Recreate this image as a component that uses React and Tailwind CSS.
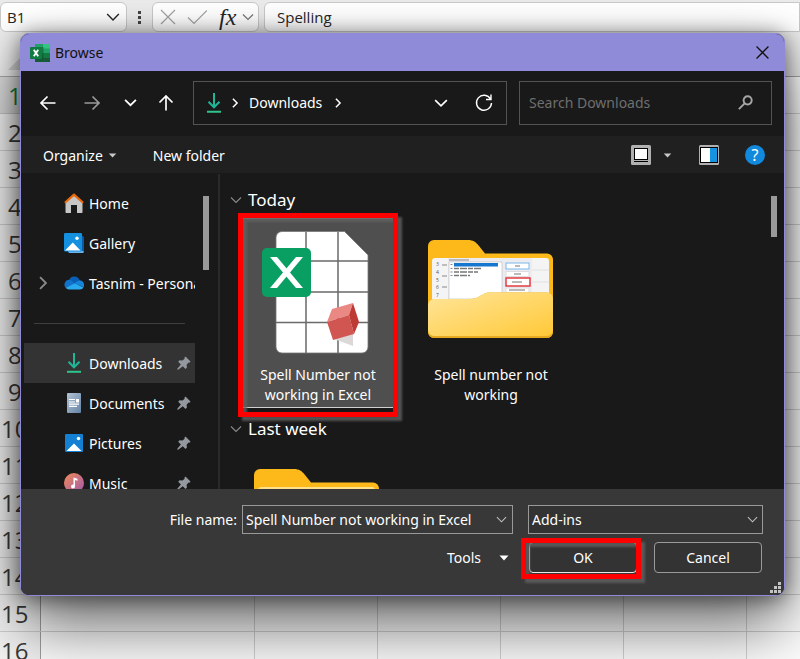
import { useState } from "react";

const ROWS = Array.from({ length: 16 }, (_, i) => i + 1);

const PLACES = [
  { label: "Home", icon: HomeIcon },
  { label: "Gallery", icon: GalleryIcon },
  { label: "Tasnim - Personal", icon: CloudIcon, expandable: true },
];

const PINNED = [
  { label: "Downloads", icon: DownloadIcon },
  { label: "Documents", icon: DocumentIcon },
  { label: "Pictures", icon: PictureIcon },
  { label: "Music", icon: MusicIcon },
];

function Chevron({ className = "w-3 h-3", dir = "down", stroke = 1.5 }) {
  const d = dir === "down" ? "M1 3.5 6 8.5 11 3.5" : "M3.5 1 8.5 6 3.5 11";
  return (
    <svg viewBox="0 0 12 12" className={className} fill="none" stroke="currentColor" strokeWidth={stroke}>
      <path d={d} />
    </svg>
  );
}

function Caret({ className }) {
  return (
    <svg viewBox="0 0 10 6" className={className} fill="currentColor">
      <path d="M0.5 0.5h9L5 5.5z" />
    </svg>
  );
}

function Arrow({ className }) {
  return (
    <svg viewBox="0 0 18 18" className={className} fill="none" stroke="currentColor" strokeWidth="1.7">
      <path d="M16.5 9H2M8.5 2.5 2 9l6.5 6.5" />
    </svg>
  );
}

function ExcelIcon() {
  return (
    <svg viewBox="0 0 20 18" className="w-5 h-[18px]">
      <path d="M5 0h15v18H5z" fill="#21a366" />
      <path d="M13 0h7v4.5h-7z" fill="#33c481" />
      <path d="M5 9h15v4.5H5z" fill="#107c41" />
      <path d="M5 13.5h15V18H5z" fill="#185c37" />
      <path d="M5 3h8.5v12.5H5z" fill="#0b4a2a" opacity=".5" />
      <rect y="3" width="12" height="12" rx=".8" fill="#107c41" />
      <path d="M3.8 5.8 8.2 12.2M8.2 5.8 3.8 12.2" stroke="#fff" strokeWidth="1.9" />
    </svg>
  );
}

function HomeIcon() {
  return (
    <svg viewBox="0 0 20 20" className="w-5 h-5">
      <path d="M1.5 9 10 2.5 18.5 9v10.2a.8.8 0 0 1-.8.8H13v-8H7v8H2.3a.8.8 0 0 1-.8-.8z" fill="#c6c6c6" />
      <path d="M.9 9.8 10 1.6l9.1 8.2" fill="none" stroke="#e8690b" strokeWidth="2.2" strokeLinejoin="round" />
    </svg>
  );
}

function GalleryIcon() {
  return (
    <svg viewBox="0 0 20 20" className="w-5 h-5">
      <path d="M4 3h14.5A1.5 1.5 0 0 1 20 4.5V19a1 1 0 0 1-1 1H5l-1-1z" fill="#0a5aa8" />
      <path d="M4 18h15.5v1a1 1 0 0 1-1 1H5z" fill="#6db3ea" />
      <rect width="18" height="18.5" rx="1.3" fill="#1490df" />
      <path d="M1 17.5 8.8 9.5l7.7 8z" fill="#fff" />
      <circle cx="13" cy="5.3" r="1.7" fill="#fff" />
    </svg>
  );
}

function CloudIcon() {
  return (
    <svg viewBox="0 0 20 14" className="w-5 h-[14px]">
      <path d="M5 4.5A5.5 5.5 0 0 1 15.5 4.2L9 9z" fill="#0a5fb5" />
      <path d="M5 3.8a4.8 4.8 0 0 0-3.3 8L11 8 7.5 4.6A5 5 0 0 0 5 3.8z" fill="#1072cb" />
      <path d="M15.2 4.2a4.8 4.8 0 0 1 4.4 7L10.5 7z" fill="#1484dc" />
      <path d="M1.6 11.8 11 7.2l8.5 4.3a4 4 0 0 1-3.5 2H5a4.8 4.8 0 0 1-3.4-1.7z" fill="#29a9ef" />
    </svg>
  );
}

function DownloadIcon() {
  return (
    <svg viewBox="0 0 20 20" className="w-5 h-5" fill="none" strokeWidth="2">
      <path d="M10 0v14M4.5 8.8 10 14.3l5.5-5.5" stroke="#1fb698" />
      <path d="M3 18.8h14" stroke="#2fc48d" />
    </svg>
  );
}

function DocumentIcon() {
  return (
    <svg viewBox="0 0 20 20" className="w-5 h-5">
      <defs>
        <linearGradient id="doc" x2="1" y2="1">
          <stop stopColor="#b3c3d4" />
          <stop offset="1" stopColor="#6483a5" />
        </linearGradient>
      </defs>
      <rect x="3" width="14" height="20" rx="1" fill="url(#doc)" />
      <path d="M5 6.5h6M5 9h6M5 11.2h10M5 13.3h8" stroke="#fff" strokeWidth="1.2" />
      <path d="M12 6h3v3.5h-3z" fill="#fff" />
    </svg>
  );
}

function PictureIcon() {
  return (
    <svg viewBox="0 0 20 20" className="w-5 h-5">
      <rect x="1" y="1" width="18" height="18" rx="1" fill="#1480d4" />
      <path d="M2.5 18 10 10.5l7.5 7.5z" fill="#fff" />
      <circle cx="14.5" cy="5.5" r="1.7" fill="#fff" />
    </svg>
  );
}

function MusicIcon() {
  return (
    <svg viewBox="0 0 20 20" className="w-5 h-5">
      <defs>
        <linearGradient id="music" x2="1" y2="1">
          <stop stopColor="#f28a55" />
          <stop offset="1" stopColor="#a058b0" />
        </linearGradient>
      </defs>
      <circle cx="10" cy="10" r="10" fill="url(#music)" />
      <path d="M9.5 13.5V4.5l4 1.2v2l-2.5-.7v6.5z" fill="#fff" />
      <circle cx="9" cy="13.4" r="2" fill="#fff" />
    </svg>
  );
}

function PinIcon() {
  return (
    <svg viewBox="0 0 14 14" className="w-[14px] h-[14px]" fill="#93999f">
      <path d="M8.5.5 13.5 5.5l-1 1.2-1-.2-1.9 2.2.3 2.8-1.4 1.4-2.7-2.7L1.5 13.5l-1.2.2.2-1.2L3.9 8.4 1.2 5.7l1.4-1.4 2.9.3 2.1-1.9-.2-1z" />
    </svg>
  );
}

function AddinFileIcon() {
  return (
    <svg viewBox="0 0 110 126" className="w-[110px] h-[126px]">
      <path d="M20 1.5h62.5L106 25v92a6 6 0 0 1-6 6H20a6 6 0 0 1-6-6V7.5a6 6 0 0 1 6-6z" fill="#fff" stroke="#777" strokeWidth=".8" />
      <path d="M44 2v121M76 2v121M14 31h92M14 62h92M14 92.5h92" stroke="#6a6a6a" strokeWidth="1.5" fill="none" />
      <path d="M72 109 91 104 91 116z" fill="#ddd8d8" />
      <path d="M70 79 91 73 87 85 65 92z" fill="#ea8884" />
      <path d="M65 92 87 85 92 104 71 110z" fill="#d15550" />
      <path d="M91 73 97 92 92 104 87 85z" fill="#bd3a35" />
      <rect y="18" width="49" height="49" rx="5" fill="#0a9f62" />
      <path d="M8 27h7l26 31h-7z" fill="#fff" />
      <path d="M41 27h-7L8 58h7z" fill="#fff" />
    </svg>
  );
}

function FolderIcon() {
  return (
    <svg viewBox="0 0 126 100" className="w-[126px] h-[100px]">
      <defs>
        <linearGradient id="front" x2="1" y2="1">
          <stop stopColor="#ffe59a" />
          <stop offset="1" stopColor="#ffc938" />
        </linearGradient>
      </defs>
      <path d="M6 0h34c5 0 8 2 11 6l6 7.5h62a6 6 0 0 1 6 6V92a6 6 0 0 1-6 6H6a6 6 0 0 1-6-6V6a6 6 0 0 1 6-6z" fill="#fcb919" />
      <rect x="4" y="18" width="117" height="60" rx="3" fill="#f4f4f4" />
      {/* thumbnail of the add-ins dialog */}
      <path d="M20 18h84v42H20z" fill="#ececf0" />
      <path d="M21 22h53v37H21z" fill="#fff" stroke="#b9b9bd" strokeWidth=".6" />
      <path d="M26 23h44v3.5H26z" fill="#1677cf" />
      <path d="M26 28.5h28M26 32h24M26 35.5h16" stroke="#777" strokeWidth="1.4" strokeDasharray="5 1 7 1" />
      <path d="M22.5 24.5h2M22.5 28.5h2M22.5 32h2M22.5 35.5h2M14 25h5M14 36h5M14 47h5M21 20h20" stroke="#888" strokeWidth="1.2" />
      <path d="M104 30h17M104 42h17" stroke="#ddd" strokeWidth=".8" />
      <g fill="#fff" strokeWidth="1">
        <rect x="78" y="23" width="23" height="6" stroke="#79b7ea" />
        <rect x="78" y="31.5" width="23" height="5" stroke="#ddd" />
        <rect x="78" y="38" width="24" height="8" stroke="#e23b42" strokeWidth="1.5" />
        <rect x="78" y="48" width="23" height="5" stroke="#ddd" />
      </g>
      <path d="M87 26h5M86 34h7M84 42h10M81 50h16" stroke="#777" strokeWidth="1.2" />
      <g fontSize="5" fontFamily="Open Sans, sans-serif" fill="#555">
        <text x="8" y="26">3</text>
        <text x="8" y="34">4</text>
        <text x="8" y="42">5</text>
        <text x="8" y="49">6</text>
        <text x="8" y="57">7</text>
      </g>
      <path d="M0 65a6 6 0 0 1 6-6h36c4 0 7-1 10-3l3-1.5c2-1.5 4-2 7-2h57a6 6 0 0 1 6 6V92a6 6 0 0 1-6 6H6a6 6 0 0 1-6-6z" fill="#e6a91f" />
      <path d="M0 65a6 6 0 0 1 6-6h36c4 0 7-1 10-3l3-1.5c2-1.5 4-2 7-2h57a6 6 0 0 1 6 6V90a6 6 0 0 1-6 6H6a6 6 0 0 1-6-6z" fill="url(#front)" />
    </svg>
  );
}

function PlainFolderIcon() {
  return (
    <svg viewBox="0 0 126 100" className="w-[126px] h-[100px]">
      <path d="M6 0h34c5 0 8 2 11 6l6 7.5h62a6 6 0 0 1 6 6V92a6 6 0 0 1-6 6H6a6 6 0 0 1-6-6V6a6 6 0 0 1 6-6z" fill="#fcb919" />
      <rect x="4" y="18" width="117" height="60" rx="3" fill="#ffe08a" />
      <path d="M0 65a6 6 0 0 1 6-6h36c4 0 7-1 10-3l3-1.5c2-1.5 4-2 7-2h57a6 6 0 0 1 6 6V90a6 6 0 0 1-6 6H6a6 6 0 0 1-6-6z" fill="#ffd45e" />
    </svg>
  );
}

function FormulaBar() {
  return (
    <div className="flex h-[33px] items-stretch bg-[#ebebeb] pt-0.5 pb-px text-[15px] text-[#262626]">
      <div className="flex w-[127px] items-center justify-between rounded-md border border-[#c9c9c9] bg-white pl-1.5 pr-1.5">
        <span>B1</span>
        <Chevron className="h-[14px] w-[14px]" stroke={1.2} />
      </div>
      <div className="flex w-[25px] flex-col items-center justify-center gap-0.5">
        <i className="h-[3px] w-[3px] bg-[#444]" />
        <i className="h-[3px] w-[3px] bg-[#444]" />
        <i className="h-[3px] w-[3px] bg-[#444]" />
      </div>
      <div className="flex w-[107px] items-center rounded-md border border-[#c9c9c9] bg-white px-1">
        <svg viewBox="0 0 50 20" className="h-5 w-[50px]" fill="none" stroke="#a3a3a3" strokeWidth="1.2">
          <path d="M4 3 18 17M18 3 4 17M31 10.5 37 16.5 50 3.5" />
        </svg>
        <span className="ml-3 font-['Liberation_Serif',serif] text-2xl italic leading-none">fx</span>
        <Chevron className="ml-auto h-3 w-3 text-[#777]" stroke={1.2} />
      </div>
      <div className="ml-[5px] flex flex-1 items-center rounded-l-md border border-[#c9c9c9] bg-white pl-3">Spelling</div>
    </div>
  );
}

function Sheet() {
  return (
    <table className="w-[869px] table-fixed border-collapse">
      <colgroup>
        <col className="w-10" />
        <col className="w-[214px]" />
        <col span={5} className="w-[123px]" />
      </colgroup>
      <thead>
        <tr className="h-[43px] bg-[#ececec]">
          <th className="border-b border-[#a8a8a8] pl-2 pt-5">
            <svg viewBox="0 0 12 12" className="h-3 w-3" fill="#cfcfcf">
              <path d="M12 0v12H0z" />
            </svg>
          </th>
          <th colSpan={6} className="border-b border-[#a8a8a8]" />
        </tr>
      </thead>
      <tbody>
        {ROWS.map((n) => (
          <tr key={n} className="h-[37px]">
            <th
              className={
                n === 1
                  ? "border-b border-r border-[#c4c4c4] bg-[#dcdcdc] p-0 pr-[10px] pt-0.5 text-2xl font-normal leading-8 text-[#107c41]"
                  : "border-b border-r border-[#d0d0d0] border-r-[#a0a0a0] bg-[#f4f4f4] p-0 pr-[10px] pt-0.5 text-2xl font-normal leading-8 text-[#3a3a3a]"
              }
            >
              {n}
            </th>
            {[0, 1, 2, 3, 4, 5].map((c) => (
              <td key={c} className="border border-[#d4d4d4]" />
            ))}
          </tr>
        ))}
      </tbody>
    </table>
  );
}

function NavBar() {
  return (
    <div className="flex h-[65px] shrink-0 items-center pb-0.5 pr-3">
      <div className="flex items-center">
        <button aria-label="Back" className="ml-[18px] w-[18px]"><Arrow className="h-[18px] w-[18px]" /></button>
        <button aria-label="Forward" className="ml-[26px] w-[18px] text-[#9a9a9a]"><Arrow className="h-[18px] w-[18px] rotate-180" /></button>
        <button aria-label="Recent locations" className="ml-[23px] w-[13px]"><Chevron className="h-[13px] w-[13px]" stroke={1.6} /></button>
        <button aria-label="Up" className="ml-5 w-[18px]"><Arrow className="h-[18px] w-[18px] rotate-90" /></button>
      </div>
      <div className="ml-[18px] flex h-11 flex-1 items-center border border-[#535353] pl-2.5">
        <DownloadIcon />
        <Chevron dir="right" className="ml-1.5 h-2.5 w-2.5" stroke={1.8} />
        <a href="#downloads" className="ml-[9px]">Downloads</a>
        <Chevron dir="right" className="ml-[11px] h-2.5 w-2.5" stroke={1.8} />
        <button aria-label="Previous locations" className="ml-auto"><Chevron className="h-[14px] w-[14px]" stroke={1.4} /></button>
        <button aria-label="Refresh" className="ml-[26px] mr-3">
          <svg viewBox="0 0 20 20" className="h-5 w-5" fill="none" stroke="currentColor" strokeWidth="1.4">
            <path d="M16.5 6A7.5 7.5 0 1 0 17.5 10M17 1.5v5h-5" />
          </svg>
        </button>
      </div>
      <label className="ml-3 flex h-11 w-[253px] items-center border border-[#535353] pl-[9px] pr-[18px]">
        <input
          type="search"
          aria-label="Search Downloads"
          placeholder="Search Downloads"
          className="min-w-0 flex-1 bg-transparent outline-none placeholder:text-[#6f6f6f]"
        />
        <svg viewBox="0 0 14 14" className="h-[15px] w-[15px]" fill="none" stroke="#a5a5a5" strokeWidth="1.8">
          <circle cx="9" cy="5" r="3.8" />
          <path d="M6.2 7.8.8 13.2" />
        </svg>
      </label>
    </div>
  );
}

function Toolbar() {
  return (
    <div className="flex h-[38px] shrink-0 items-center border-b border-[#191919] bg-[#202020] pl-[22px] pr-[19px] pt-px">
      <button className="flex items-center gap-[5px]">
        Organize
        <Caret className="h-[5px] w-[9px] text-[#c8c8c8]" />
      </button>
      <button className="ml-9">New folder</button>
      <button aria-label="View" className="ml-auto">
        <svg viewBox="0 0 20 20" className="h-5 w-5">
          <rect width="20" height="20" rx="1.5" fill="#b0b0b0" />
          <path d="M3 3h14v14H3z" fill="#000" />
          <path d="M4 4h12v10H4z" fill="#fff" />
          <path d="M3 15.5h14" stroke="#b0b0b0" />
        </svg>
      </button>
      <button aria-label="More view options" className="ml-3"><Caret className="h-[5px] w-[9px] text-[#c8c8c8]" /></button>
      <button aria-label="Preview pane" className="ml-[27px]">
        <svg viewBox="0 0 20 20" className="h-5 w-5">
          <rect width="20" height="20" rx="1.5" fill="#b0b0b0" />
          <path d="M1 2h18v16H1z" fill="#000" />
          <path d="M2 3h9v14H2z" fill="#fff" />
          <path d="M11 3h7v14h-7z" fill="#1592e0" />
        </svg>
      </button>
      <button aria-label="Help" className="ml-[26px] h-5 w-5 rounded-full bg-[#118ade] text-base leading-5">?</button>
    </div>
  );
}

function SidebarItem({ item, pinned, active }) {
  const Icon = item.icon;
  return (
    <a
      href="#place"
      className={
        active
          ? "flex h-10 shrink-0 items-center whitespace-nowrap bg-[#333333] pl-3 pr-1"
          : "flex h-10 shrink-0 items-center whitespace-nowrap pl-3 pr-1"
      }
    >
      <span className="w-4 shrink-0 text-[#8a8a8a]">
        {item.expandable && <Chevron dir="right" className="h-[14px] w-[14px]" stroke={1.6} />}
      </span>
      <span className="ml-3 mr-[5px] flex w-5 shrink-0 justify-center"><Icon /></span>
      <span>{item.label}</span>
      {pinned && <span className="ml-auto"><PinIcon /></span>}
    </a>
  );
}

function Sidebar() {
  return (
    <div className="flex w-[199px] shrink-0 border-r-2 border-[#2a2a2a]">
      <nav className="ml-[3px] flex w-[171px] flex-col overflow-hidden pt-[9px]">
        {PLACES.map((p) => <SidebarItem key={p.label} item={p} />)}
        <hr className="mx-[10px] mb-[19px] mt-5 border-[#3f3f3f]" />
        {PINNED.map((p) => (
          <SidebarItem key={p.label} item={p} pinned active={p.label === "Downloads"} />
        ))}
      </nav>
      <div className="ml-2 mt-[22px] h-[74px] w-1.5 bg-[#9a9a9a]" />
    </div>
  );
}

function GroupHeading({ children }) {
  return (
    <h2 className="flex h-9 items-center gap-1.5 pl-2.5 text-[17px]">
      <Chevron className="h-3 w-3 text-[#8a8a8a]" stroke={1.1} />
      {children}
    </h2>
  );
}

// Red frame drawn over the step the reader has to follow
function Highlight({ className }) {
  return (
    <div className={`pointer-events-none absolute border-[5px] border-[#ff0000] drop-shadow-[4px_4px_1px_#606060cc] ${className}`} />
  );
}

function FileList() {
  return (
    <div className="flex min-w-0 flex-1">
      <div className="flex-1 overflow-hidden pt-2">
        <GroupHeading>Today</GroupHeading>
        <div className="flex items-start gap-6 pl-[23px]">
          <button className="relative flex h-[190px] w-[150px] flex-col items-center border-b border-t border-b-[#d0d0d0] border-t-[#8a8a8a] bg-[#4f4f4f] pt-[11px] text-center leading-5">
            <span className="mb-[9px] mr-0.5"><AddinFileIcon /></span>
            Spell Number not
            <br />
            working in Excel
            <Highlight className="-left-[5px] -right-[5px] -top-1.5 -bottom-[10px]" />
          </button>
          <button className="flex w-[148px] flex-col items-center pt-[22px] text-center leading-5">
            <span className="mb-[25px]"><FolderIcon /></span>
            Spell number not
            <br />
            working
          </button>
        </div>
        <div className="mt-[3px]">
          <GroupHeading>Last week</GroupHeading>
        </div>
        <div className="flex pl-[23px]">
          <button aria-label="Folder" className="flex w-[148px] justify-center pt-[22px]"><PlainFolderIcon /></button>
        </div>
      </div>
      <div className="mr-[7px] mt-[22px] h-[41px] w-1.5 bg-[#9a9a9a]" />
    </div>
  );
}

function Footer() {
  const [name, setName] = useState("Spell Number not working in Excel");
  return (
    <div className="shrink-0 bg-[#383838] pb-[22px] pt-4">
      <div className="flex items-center justify-end pr-[21px]">
        <label htmlFor="filename" className="mr-[5px]">File name:</label>
        <div className="flex h-[29px] w-[271px] items-center border border-[#999] pl-[3px] pr-[5px]">
          <input
            id="filename"
            value={name}
            onChange={(e) => setName(e.target.value)}
            className="min-w-0 flex-1 bg-transparent outline-none"
          />
          <button aria-label="Recent names" className="text-[#c4c4c4]"><Chevron className="h-[11px] w-[11px]" stroke={1.1} /></button>
        </div>
        <div className="relative ml-[15px] h-[29px] w-[235px]">
          <select
            aria-label="File type"
            className="h-[29px] w-full appearance-none border border-[#999] bg-[#333333] pl-[3px] outline-none"
          >
            <option>Add-ins</option>
          </select>
          <Chevron className="pointer-events-none absolute right-[5px] top-[9px] h-[11px] w-[11px] text-[#c4c4c4]" stroke={1.1} />
        </div>
      </div>
      <div className="mt-2 flex items-center justify-end pr-[22px]">
        <button className="mr-5 flex items-center gap-[18px]">
          Tools
          <Caret className="h-[6px] w-[10px]" />
        </button>
        <div className="relative">
          <button className="h-[31px] w-[108px] rounded border border-[#e8e8e8] bg-[#333333]">OK</button>
          <Highlight className="-left-2 -right-1 -top-1 -bottom-1.5" />
        </div>
        <button className="ml-[17px] h-[31px] w-[108px] rounded border border-[#9a9a9a] bg-[#333333]">Cancel</button>
      </div>
      <svg viewBox="0 0 11 11" className="absolute bottom-0.5 right-[3px] h-[11px] w-[11px]" fill="#c4c4c4">
        <path d="M8 0h3v3H8zM4 4h3v3H4zM8 4h3v3H8zM0 8h3v3H0zM4 8h3v3H4zM8 8h3v3H8z" />
      </svg>
    </div>
  );
}

export default function App() {
  return (
    <div className="relative h-screen overflow-hidden bg-white font-['Open_Sans','Noto_Sans',sans-serif]">
      <FormulaBar />
      <Sheet />
      <div
        role="dialog"
        aria-label="Browse"
        className="absolute bottom-[63px] left-5 right-[15px] top-[33px] flex flex-col overflow-hidden rounded-[9px] border border-[#8f8bd8] bg-[#191919] font-['Noto_Sans',sans-serif] text-[14px] text-white shadow-[0_32px_64px_rgba(0,0,0,0.56),0_2px_21px_rgba(0,0,0,0.55)]"
      >
        <div className="flex h-[37px] shrink-0 items-center bg-[#8f8bd8] pl-[9px] pr-[15px] text-[#111]">
          <ExcelIcon />
          <span className="ml-[5px]">Browse</span>
          <button aria-label="Close" className="ml-auto">
            <svg viewBox="0 0 12 12" className="h-[13px] w-[13px]" stroke="currentColor" strokeWidth="1.2">
              <path d="M.5.5 11.5 11.5M11.5.5.5 11.5" />
            </svg>
          </button>
        </div>
        <NavBar />
        <Toolbar />
        <div className="flex min-h-0 flex-1 overflow-hidden">
          <Sidebar />
          <FileList />
        </div>
        <Footer />
      </div>
    </div>
  );
}
